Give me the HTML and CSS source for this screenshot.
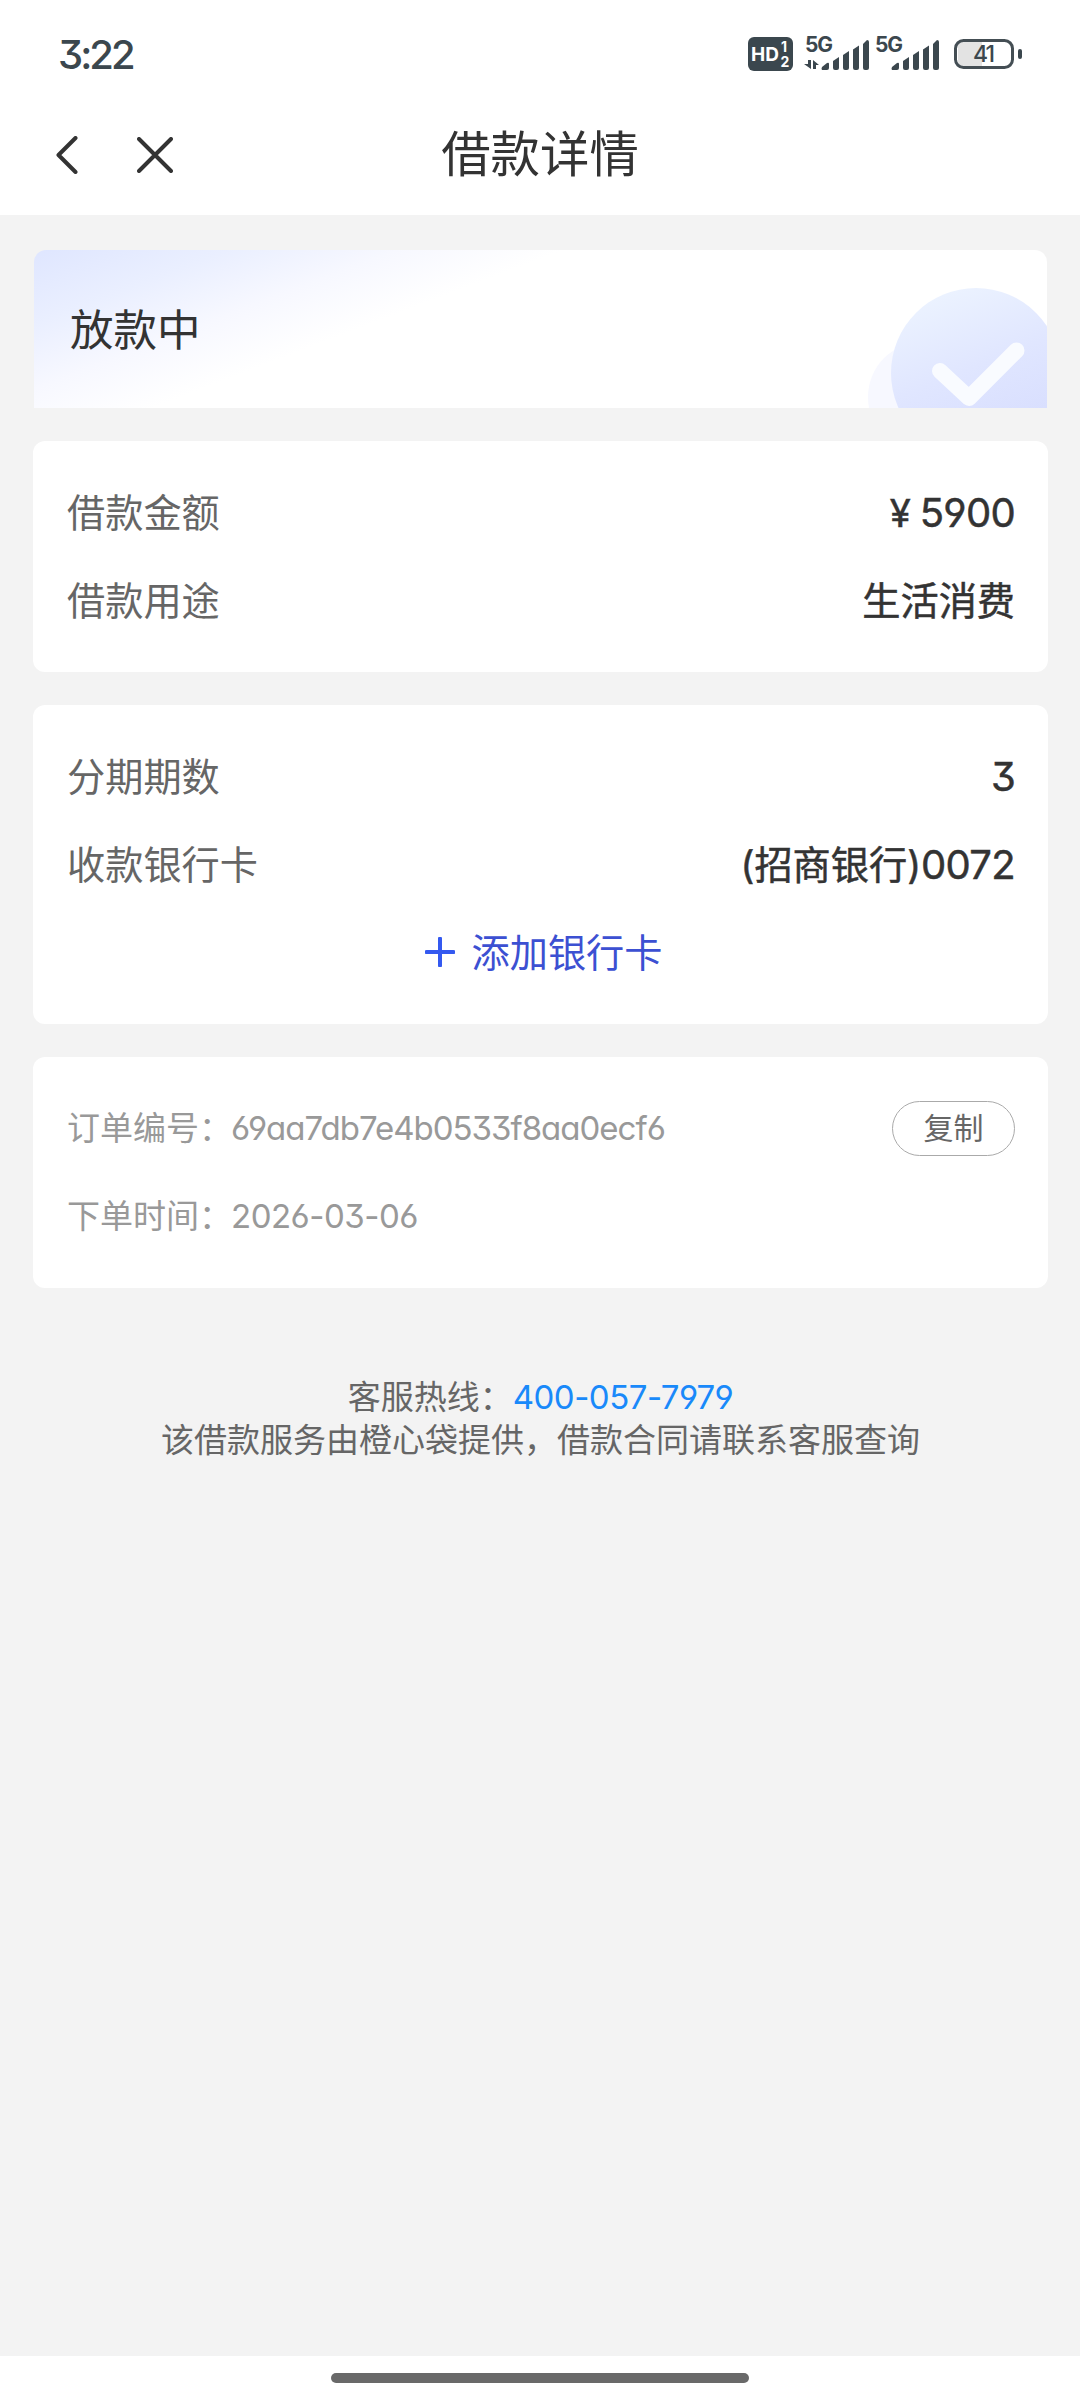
FILE: index.html
```html
<!DOCTYPE html>
<html lang="zh-CN">
<head>
  <meta charset="UTF-8">
  <meta name="viewport" content="width=device-width, initial-scale=1.0">
  <title>借款详情</title>
  <link rel="stylesheet" href="styles.css">
</head>
<body>
  <div class="status-bar">
    <div class="time">3:22</div>
    <div class="status-icons">
      <svg class="icon-hd" width="45" height="34" viewBox="0 0 45 34">
        <rect width="45" height="34" rx="6" fill="#3b474e"/>
        <g fill="#fff" font-family="Inter" font-weight="700">
          <text x="3" y="24" font-size="19" textLength="28">HD</text>
          <text x="33" y="15" font-size="14">1</text>
          <text x="32.500" y="30" font-size="14">2</text>
        </g>
      </svg>
      <svg class="icon-signal" width="66" height="34" viewBox="0 0 66 34" fill="#3b474e">
        <text x="1" y="15" font-family="Inter" font-weight="700" font-size="21" textLength="28">5G</text>
        <path d="M4 23h3v9L0 27h4zM9 32v-9l6 5h-3v4z"/>
        <path d="M18 33q-1-1 0-3l5-4q2-1 2 1v4q0 2-2 2zM29 24l6-4v11q0 2-2 2h-2q-2 0-2-2zM39 18l6-4v17q0 2-2 2h-2q-2 0-2-2zM49 12.500l6-4v22.500q0 2-2 2h-2q-2 0-2-2zM59 7l4-4q2 0 2 2v26q0 2-2 2h-2q-2 0-2-2z"/>
      </svg>
      <svg class="icon-signal" width="66" height="34" viewBox="0 0 66 34" fill="#3b474e">
        <text x="1" y="15" font-family="Inter" font-weight="700" font-size="21" textLength="28">5G</text>
        <path d="M18 33q-1-1 0-3l5-4q2-1 2 1v4q0 2-2 2zM29 24l6-4v11q0 2-2 2h-2q-2 0-2-2zM39 18l6-4v17q0 2-2 2h-2q-2 0-2-2zM49 12.500l6-4v22.500q0 2-2 2h-2q-2 0-2-2zM59 7l4-4q2 0 2 2v26q0 2-2 2h-2q-2 0-2-2z"/>
      </svg>
      <svg class="icon-battery" width="68" height="30" viewBox="0 0 68 30">
        <path d="M9 3h19v24H9q-5 0-5-5V8q0-5 5-5z" fill="#e3e3e3"/>
        <rect x="1.500" y="1.500" width="57" height="27" rx="8" fill="none" stroke="#444e54" stroke-width="3"/>
        <rect x="64" y="10" width="4" height="10" rx="2" fill="#3b474e"/>
        <text x="19" y="23" font-family="Inter" font-weight="500" font-size="23" textLength="22" fill="#3b474e">41</text>
      </svg>
    </div>
  </div>

  <div class="nav">
    <div class="nav-buttons">
      <svg width="22" height="38" viewBox="0 0 22 38">
        <path d="M19.500 2L2.500 19l17 17"/>
      </svg>
      <svg width="36" height="36" viewBox="0 0 36 36">
        <path d="M2 2l32 32M34 2L2 34"/>
      </svg>
    </div>
    <div class="nav-title">借款详情</div>
  </div>

  <div class="main">
    <div class="banner">
      <div class="banner-text">放款中</div>
      <svg width="180" height="158" viewBox="0 0 180 158">
        <defs>
          <linearGradient id="round" x1="0.2" y1="0" x2="0.6" y2="1">
            <stop offset="0" stop-color="#edf4ff"/>
            <stop offset="0.5" stop-color="#e0e6ff"/>
            <stop offset="1" stop-color="#d6dcfe"/>
          </linearGradient>
        </defs>
        <circle cx="56" cy="147" r="55" fill="#f7f8ff"/>
        <circle cx="109" cy="123" r="85" fill="url(#round)"/>
        <path d="M73 121l29 27 47.500-47.500" fill="none" stroke="#f9fbff" stroke-width="16" stroke-linecap="round" stroke-linejoin="round"/>
      </svg>
    </div>

    <div class="card">
      <div class="row">
        <span class="label">借款金额</span>
        <span class="value amount"><span class="yen">¥</span><span class="num">5900</span></span>
      </div>
      <div class="row">
        <span class="label">借款用途</span>
        <span class="value">生活消费</span>
      </div>
    </div>

    <div class="card">
      <div class="row">
        <span class="label">分期期数</span>
        <span class="value amount"><span class="num">3</span></span>
      </div>
      <div class="row">
        <span class="label">收款银行卡</span>
        <span class="value">(招商银行)<span class="num">0072</span></span>
      </div>
      <div class="row add-card">
        <svg width="30" height="30" viewBox="0 0 30 30">
          <path d="M15 1.500v27M1.500 15h27"/>
        </svg>
        <span>添加银行卡</span>
      </div>
    </div>

    <div class="card order">
      <div class="row">
        <span>订单编号：<span class="order-id">69aa7db7e4b0533f8aa0ecf6</span></span>
        <button class="copy">复制</button>
      </div>
      <div class="row">
        <span>下单时间：<span class="order-date">2026-03-06</span></span>
      </div>
    </div>

    <div class="service">
      <div>客服热线：<a class="phone">400-057-7979</a></div>
      <div>该借款服务由橙心袋提供，借款合同请联系客服查询</div>
    </div>
  </div>

  <div class="home-bar">
    <div class="home-line"></div>
  </div>
</body>
</html>
```

FILE: styles.css
```css
body {
  margin: 0;
  height: 2400px;
  display: flex;
  flex-direction: column;
  font-family: Inter, "Noto Sans CJK SC", sans-serif;
  font-feature-settings: "cv03", "cv04", "cv09", "cv11";
  color: #333;
  background-color: #f3f3f3;
}

svg {
  display: block;
}

.status-bar {
  display: flex;
  justify-content: space-between;
  align-items: center;
  height: 82px;
  padding: 13px 58px 0 58px;
  background-color: #fff;
}

.time {
  font-size: 40px;
  font-weight: 500;
  letter-spacing: -3px;
  color: #3b474e;
}

.status-icons {
  display: flex;
  align-items: center;
}

.icon-hd {
  margin-right: 11px;
}

.icon-signal {
  margin-right: 4px;
  overflow: visible;
}

.icon-battery {
  margin-left: 10px;
}

.nav {
  display: grid;
  grid-template-columns: 1fr auto 1fr;
  align-items: center;
  height: 120px;
  padding: 0 56px;
  background-color: #fff;
}

.nav-buttons {
  display: flex;
  align-items: center;
  gap: 59px;
}

.nav-buttons path {
  fill: none;
  stroke: #333;
  stroke-width: 4;
  stroke-linecap: round;
  stroke-linejoin: round;
}

.nav-title {
  font-size: 49.400px;
  line-height: 118px;
  padding-bottom: 2px;
}

.main {
  flex: 1;
  padding: 35px 32px 0 33px;
}

.banner {
  display: flex;
  justify-content: space-between;
  align-items: center;
  height: 158px;
  margin: 0 1px 33px;
  border-radius: 12px 12px 0 0;
  overflow: hidden;
  background: linear-gradient(159deg, #dfe6ff 0, #eaefff 70px, #f7f8ff 130px, #fff 190px);
}

.banner-text {
  padding: 0 0 3px 36px;
  font-size: 43.500px;
}

.card {
  margin-bottom: 33px;
  padding: 27px 33px 28px 34px;
  border-radius: 12px;
  background-color: #fff;
}

.row {
  display: flex;
  justify-content: space-between;
  align-items: center;
  height: 88px;
  font-size: 38.200px;
}

.row > span {
  padding-bottom: 4px;
}

.row > .amount {
  padding-bottom: 0;
}

.label {
  color: #666;
}

.value {
  -webkit-text-stroke: 0.500px #333;
}

.num {
  font-size: 40px;
  letter-spacing: -0.700px;
}

.yen {
  margin-right: 9px;
}

.add-card {
  justify-content: center;
  gap: 17px;
  padding-left: 5px;
  color: #3c50d2;
}

.add-card path {
  stroke: #3459f0;
  stroke-width: 4;
  stroke-linecap: round;
}

.order .row {
  font-size: 33px;
  color: #999;
}

.order-id {
  margin-left: -1px;
  letter-spacing: -1px;
}

.order-date {
  margin-left: -1px;
  letter-spacing: -0.500px;
}

.copy {
  width: 123px;
  height: 55px;
  padding: 0 0 4px;
  font-family: inherit;
  font-size: 30px;
  color: #666;
  border: 1px solid #aaa;
  border-radius: 28px;
  background-color: #fff;
}

.service {
  padding-top: 55px;
  text-align: center;
  font-size: 33px;
  line-height: 43px;
  color: #666;
}

.phone {
  letter-spacing: -0.500px;
  color: #1989fa;
}

.home-bar {
  display: flex;
  justify-content: center;
  height: 27px;
  padding-top: 17px;
  background-color: #fff;
}

.home-line {
  width: 418px;
  height: 10px;
  border-radius: 5px;
  background-color: #696969;
}
```
